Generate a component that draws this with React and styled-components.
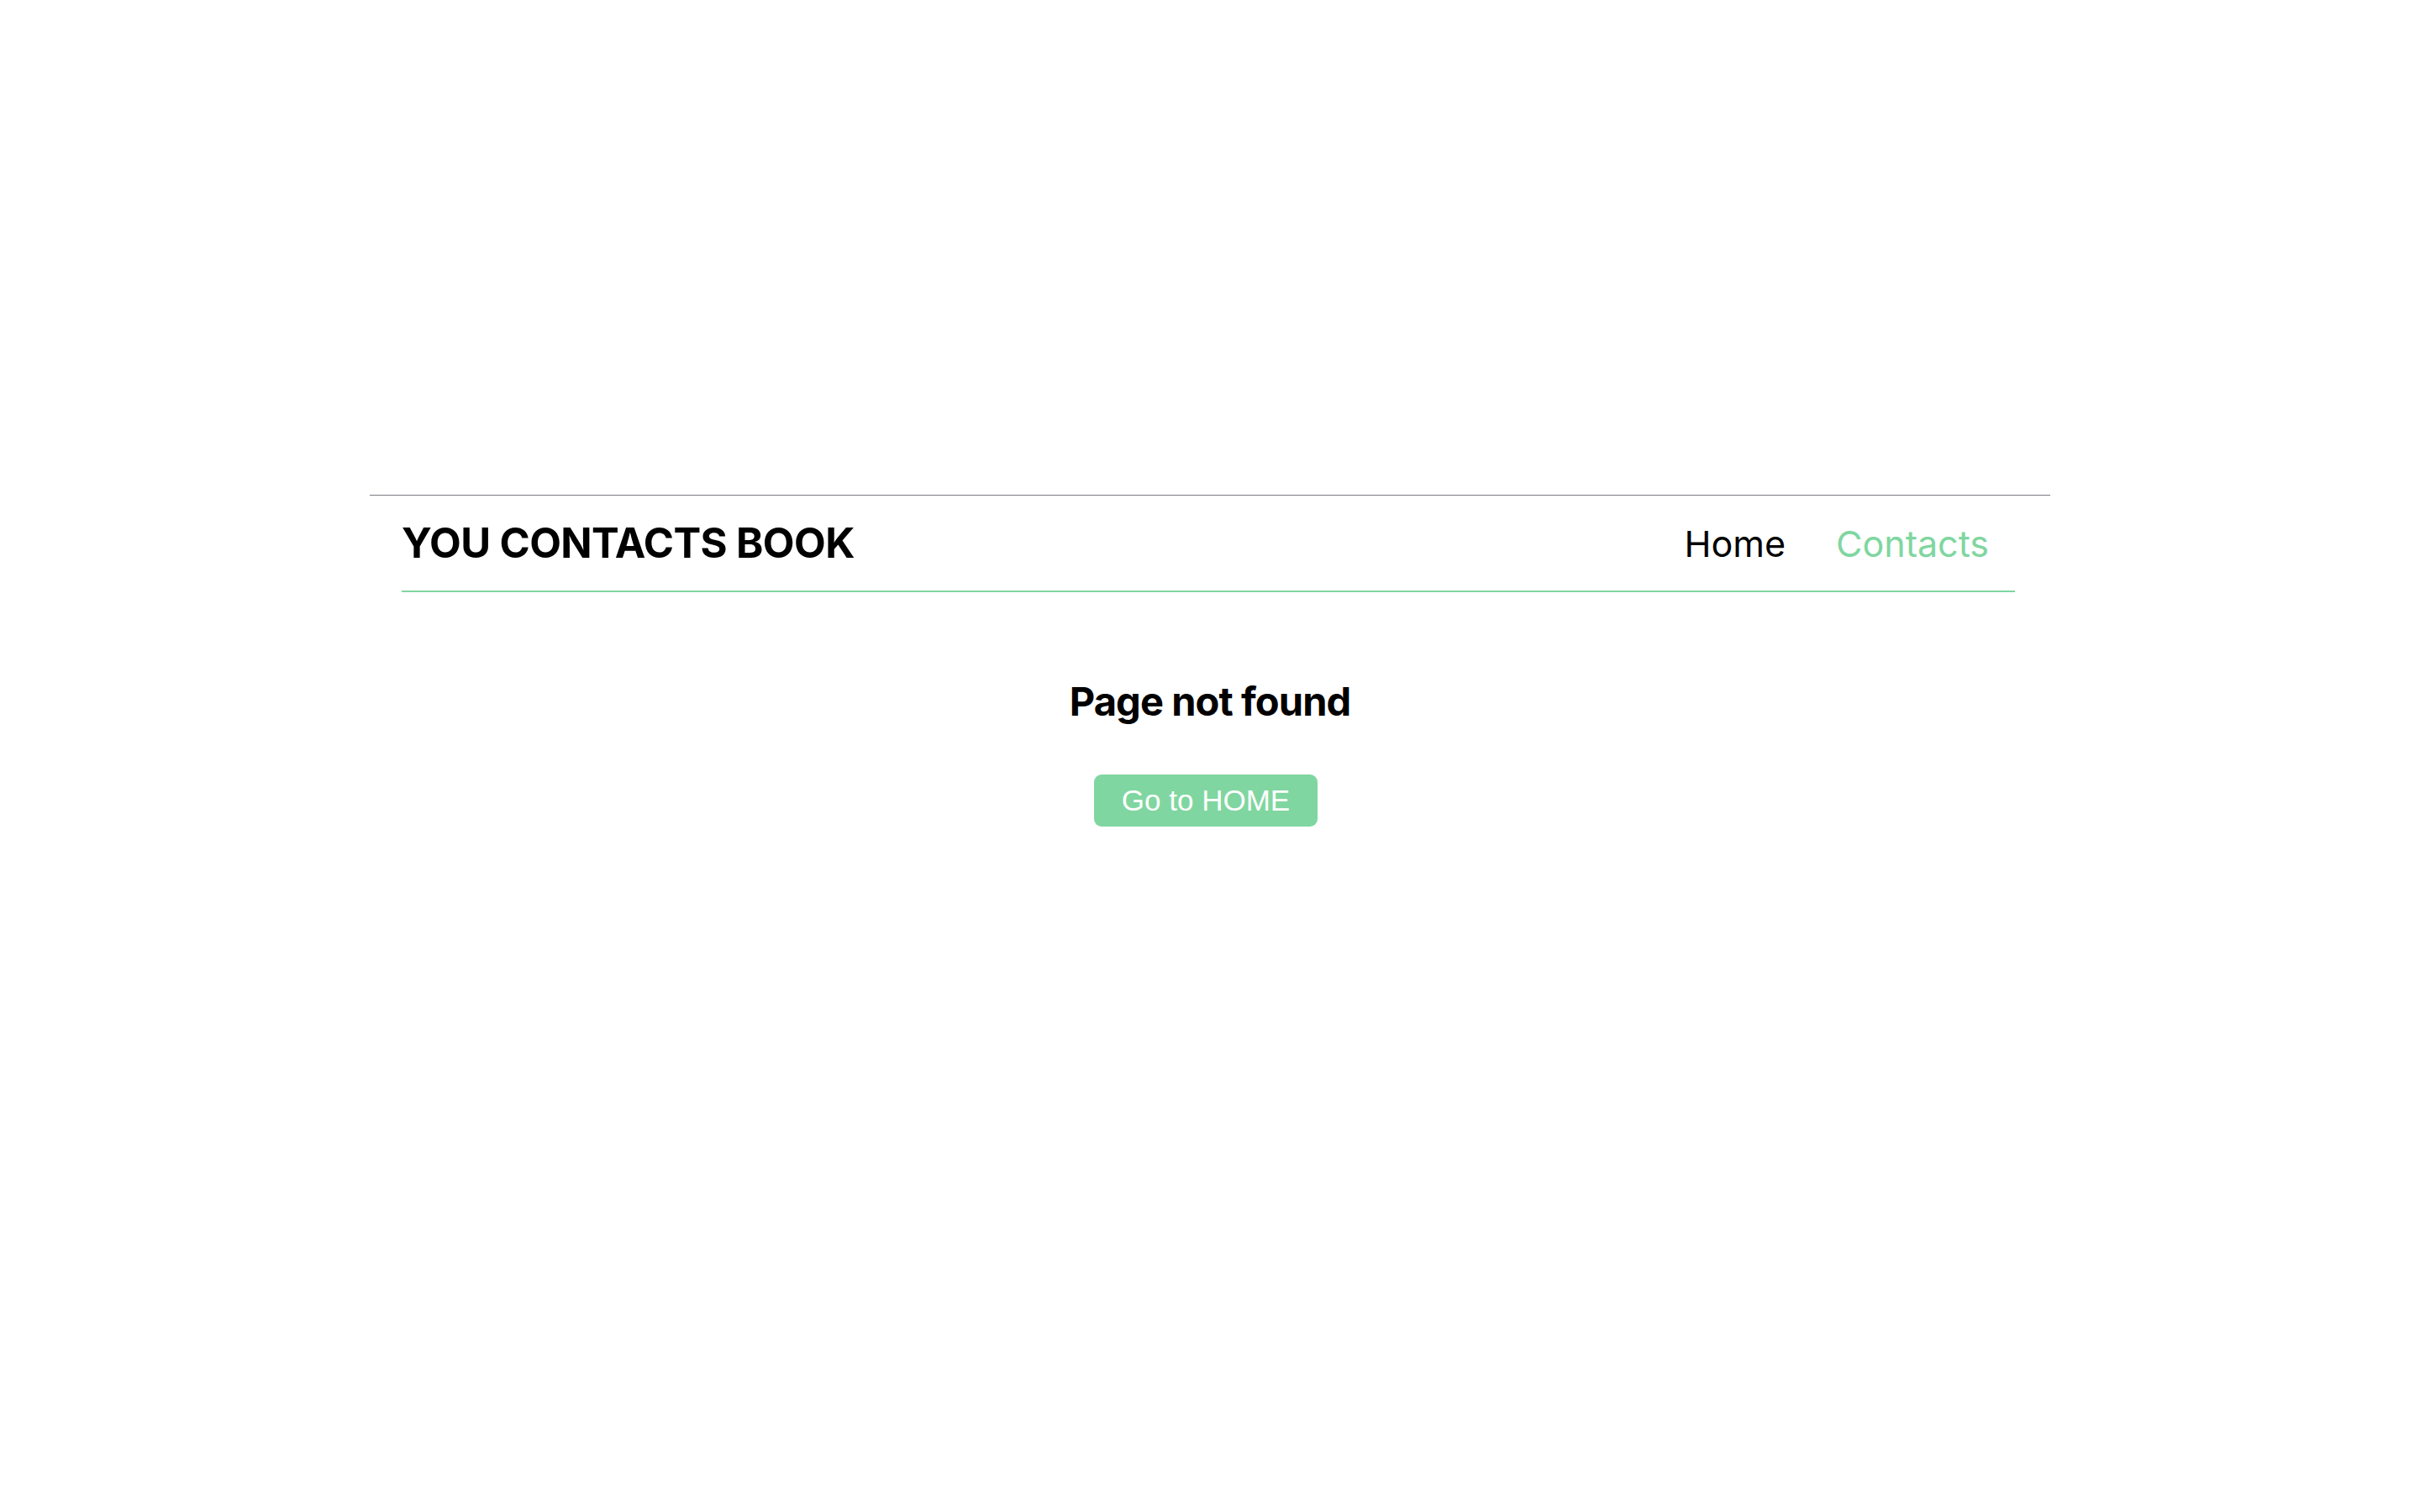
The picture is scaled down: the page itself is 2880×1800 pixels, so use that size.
import React from 'react';
import styled, { createGlobalStyle } from 'styled-components';

const GlobalStyle = createGlobalStyle`
  body {
    margin: 0;
    background: #ffffff;
    font-family: Inter, "Noto Sans", sans-serif;
    color: #000000;
  }
`;

const Layout = styled.div`
  width: 2000px;
  margin: 589px auto 0;
  border-top: 1px solid #7c7c82;
`;

const Header = styled.header`
  display: flex;
  align-items: center;
  justify-content: space-between;
  height: 113px;
  margin: 0 42px 0 38px;
  border-bottom: 2px solid #80d6a0;
`;

const Logo = styled.h1`
  margin: 0;
  font-size: 49px;
  font-weight: 700;
  letter-spacing: -0.6px;
`;

const Nav = styled.nav`
  display: flex;
  gap: 60px;
  padding-right: 31px;
`;

const NavLink = styled.a`
  font-size: 43px;
  font-weight: 400;
  text-decoration: none;
  color: ${({ $active }) => ($active ? '#80d6a0' : '#000000')};
  cursor: pointer;
`;

const Main = styled.main`
  display: flex;
  flex-direction: column;
  align-items: center;
  padding-top: 101px;
`;

const Title = styled.h2`
  margin: 0 0 58px;
  font-size: 47px;
  font-weight: 700;
  line-height: 58px;
  letter-spacing: -0.9px;
`;

const HomeButton = styled.button`
  height: 62px;
  margin-right: 10px;
  padding: 0 33px;
  border: none;
  border-radius: 9px;
  background: #80d6a0;
  color: #ffffff;
  font-family: "Liberation Sans", Arial, sans-serif;
  font-size: 35px;
  cursor: pointer;
`;

const App = () => {
  return (
    <>
      <GlobalStyle />
      <Layout>
        <Header>
          <Logo>YOU CONTACTS BOOK</Logo>
          <Nav>
            <NavLink>Home</NavLink>
            <NavLink $active>Contacts</NavLink>
          </Nav>
        </Header>
        <Main>
          <Title>Page not found</Title>
          <HomeButton>Go to HOME</HomeButton>
        </Main>
      </Layout>
    </>
  );
};

export default App;
